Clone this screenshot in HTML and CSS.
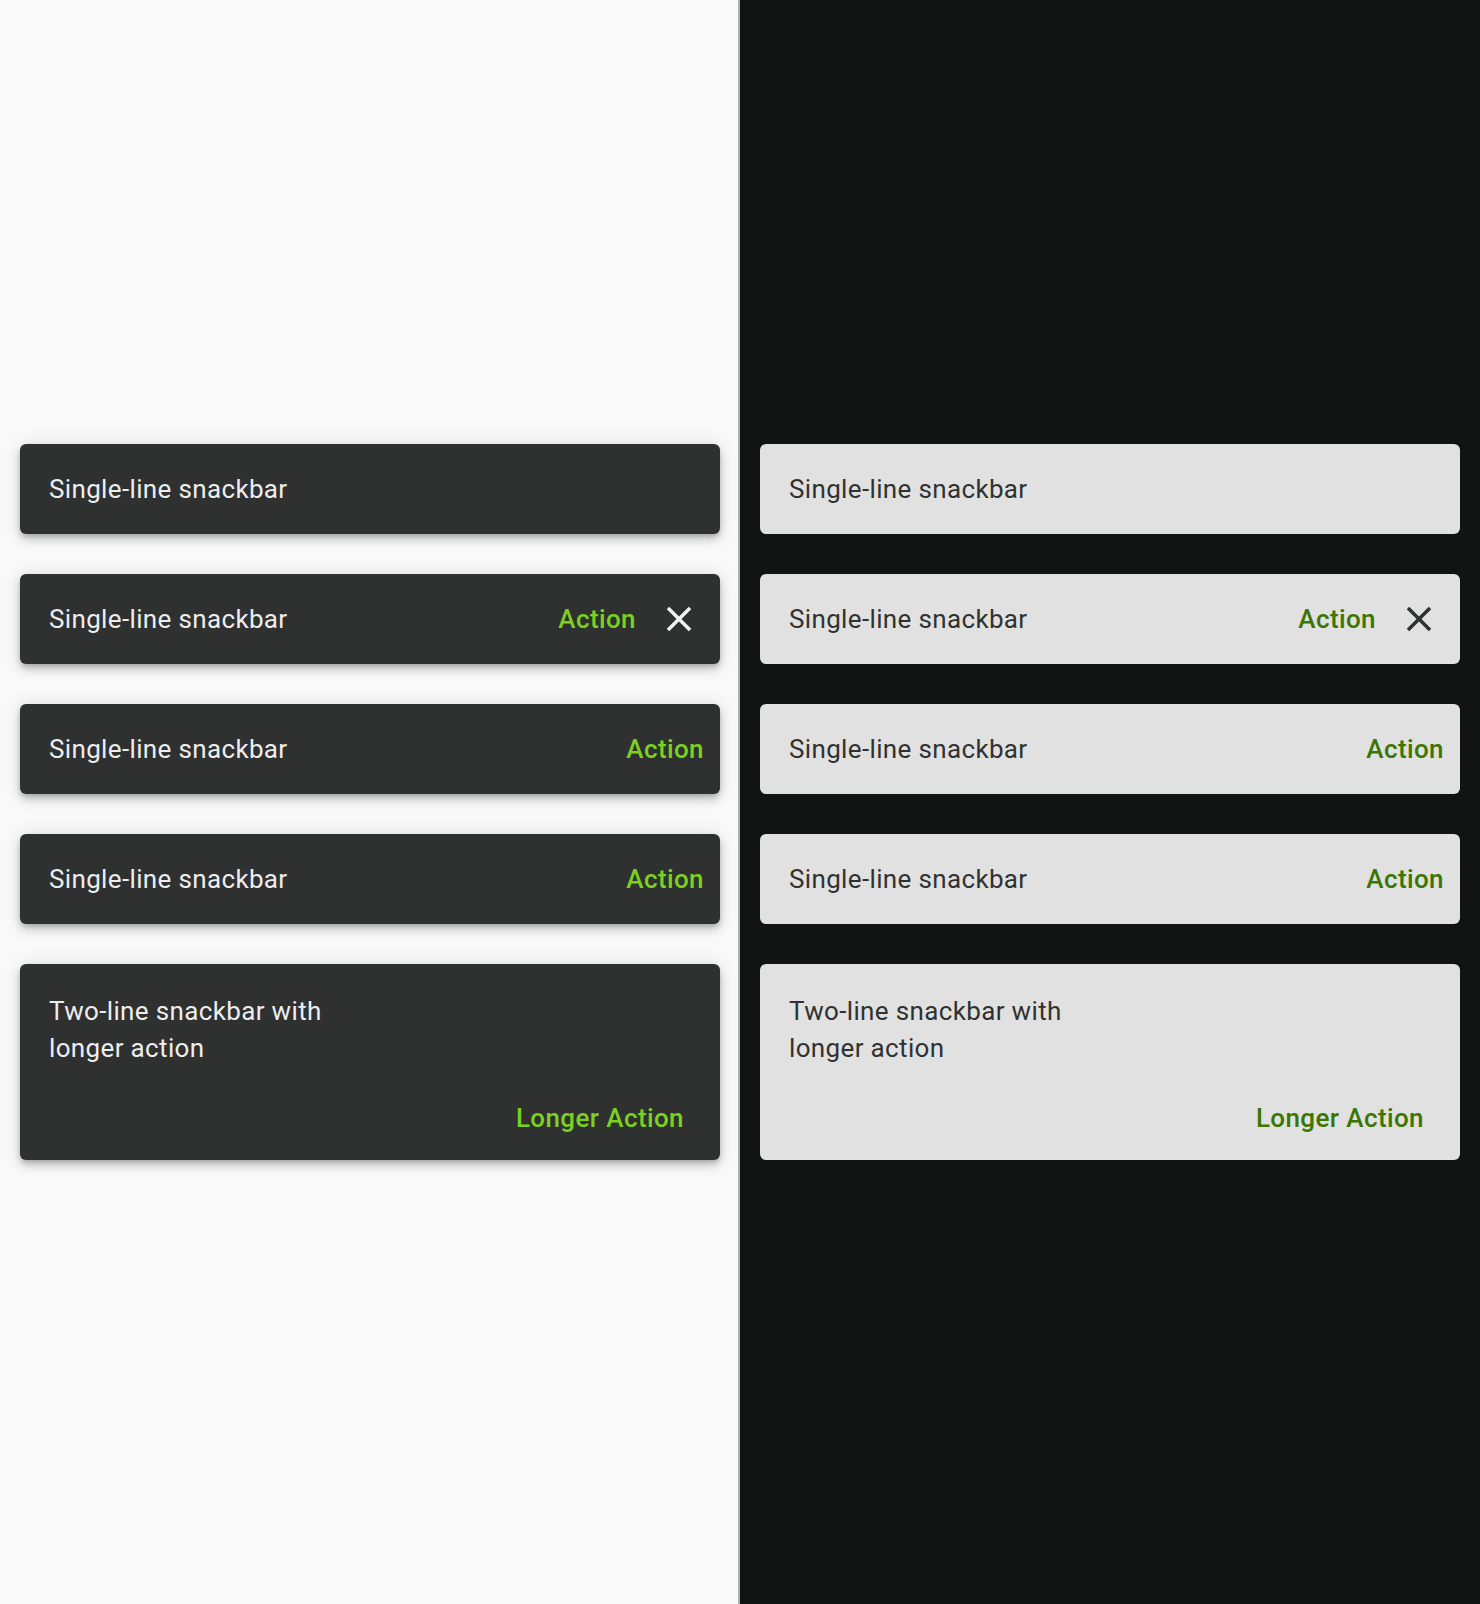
FILE: index.html
```html
<!DOCTYPE html>
<html lang="en">
<head>
<meta charset="utf-8">
<title>Snackbars</title>
<link rel="stylesheet" href="styles.css">
</head>
<body>
<div class="page">
  <section class="panel panel-light">
    <div class="snackbar">
      <span class="label">Single-line snackbar</span>
    </div>
    <div class="snackbar with-close">
      <span class="label">Single-line snackbar</span>
      <span class="action">Action</span>
      <span class="close"><svg viewBox="0 0 24 24" width="42" height="42"><path d="M19 6.41L17.59 5 12 10.59 6.41 5 5 6.41 10.59 12 5 17.59 6.41 19 12 13.41 17.59 19 19 17.59 13.41 12z"/></svg></span>
    </div>
    <div class="snackbar">
      <span class="label">Single-line snackbar</span>
      <span class="action">Action</span>
    </div>
    <div class="snackbar">
      <span class="label">Single-line snackbar</span>
      <span class="action">Action</span>
    </div>
    <div class="snackbar two-line">
      <span class="label">Two-line snackbar with<br>longer action</span>
      <span class="action">Longer Action</span>
    </div>
  </section>
  <section class="panel panel-dark">
    <div class="snackbar">
      <span class="label">Single-line snackbar</span>
    </div>
    <div class="snackbar with-close">
      <span class="label">Single-line snackbar</span>
      <span class="action">Action</span>
      <span class="close"><svg viewBox="0 0 24 24" width="42" height="42"><path d="M19 6.41L17.59 5 12 10.59 6.41 5 5 6.41 10.59 12 5 17.59 6.41 19 12 13.41 17.59 19 19 17.59 13.41 12z"/></svg></span>
    </div>
    <div class="snackbar">
      <span class="label">Single-line snackbar</span>
      <span class="action">Action</span>
    </div>
    <div class="snackbar">
      <span class="label">Single-line snackbar</span>
      <span class="action">Action</span>
    </div>
    <div class="snackbar two-line">
      <span class="label">Two-line snackbar with<br>longer action</span>
      <span class="action">Longer Action</span>
    </div>
  </section>
</div>
</body>
</html>
```

FILE: styles.css
```css
* { box-sizing: border-box; }
html, body { margin: 0; padding: 0; }
body {
  font-family: Roboto, "Noto Sans", "Liberation Sans", sans-serif;
  width: 1480px;
  height: 1604px;
  overflow: hidden;
}
.page {
  display: grid;
  grid-template-columns: 740px 740px;
  height: 1604px;
}
.panel {
  display: flex;
  flex-direction: column;
  justify-content: center;
  gap: 40px;
  padding: 0 20px;
}
.panel-light {
  background: #f9f9f9;
  border-right: 2px solid #aeaeb3;
  padding-right: 18px;
}
.panel-dark {
  background: #121414;
}
.snackbar {
  display: flex;
  align-items: center;
  height: 90px;
  padding: 0 16px 0 29px;
  border-radius: 6px;
  font-size: 26px;
  letter-spacing: 0.35px;
}
.panel-light .snackbar {
  background: #2f3030;
  color: #ededed;
  box-shadow: 0 3px 5px -1px rgba(0,0,0,.2), 0 6px 10px 0 rgba(0,0,0,.14), 0 1px 18px 0 rgba(0,0,0,.12);
}
.panel-dark .snackbar {
  background: #e1e1e1;
  color: #303232;
}
.label { flex: 1; }
.action {
  font-weight: 500;
  letter-spacing: 0.4px;
}
.panel-light .action { color: #7bd120; }
.panel-dark .action { color: #3a7600; }
.snackbar.with-close { padding-right: 20px; }
.close {
  display: flex;
  margin-left: 22px;
}
.panel-light .close svg { fill: #f2f2f2; }
.panel-dark .close svg { fill: #303232; }
.snackbar.two-line {
  height: 196px;
  flex-direction: column;
  align-items: stretch;
  padding: 29px 36px 23px 29px;
}
.two-line .label {
  flex: none;
  line-height: 37px;
}
.two-line .action {
  align-self: flex-end;
  line-height: 37px;
  margin-top: 33px;
}
```
